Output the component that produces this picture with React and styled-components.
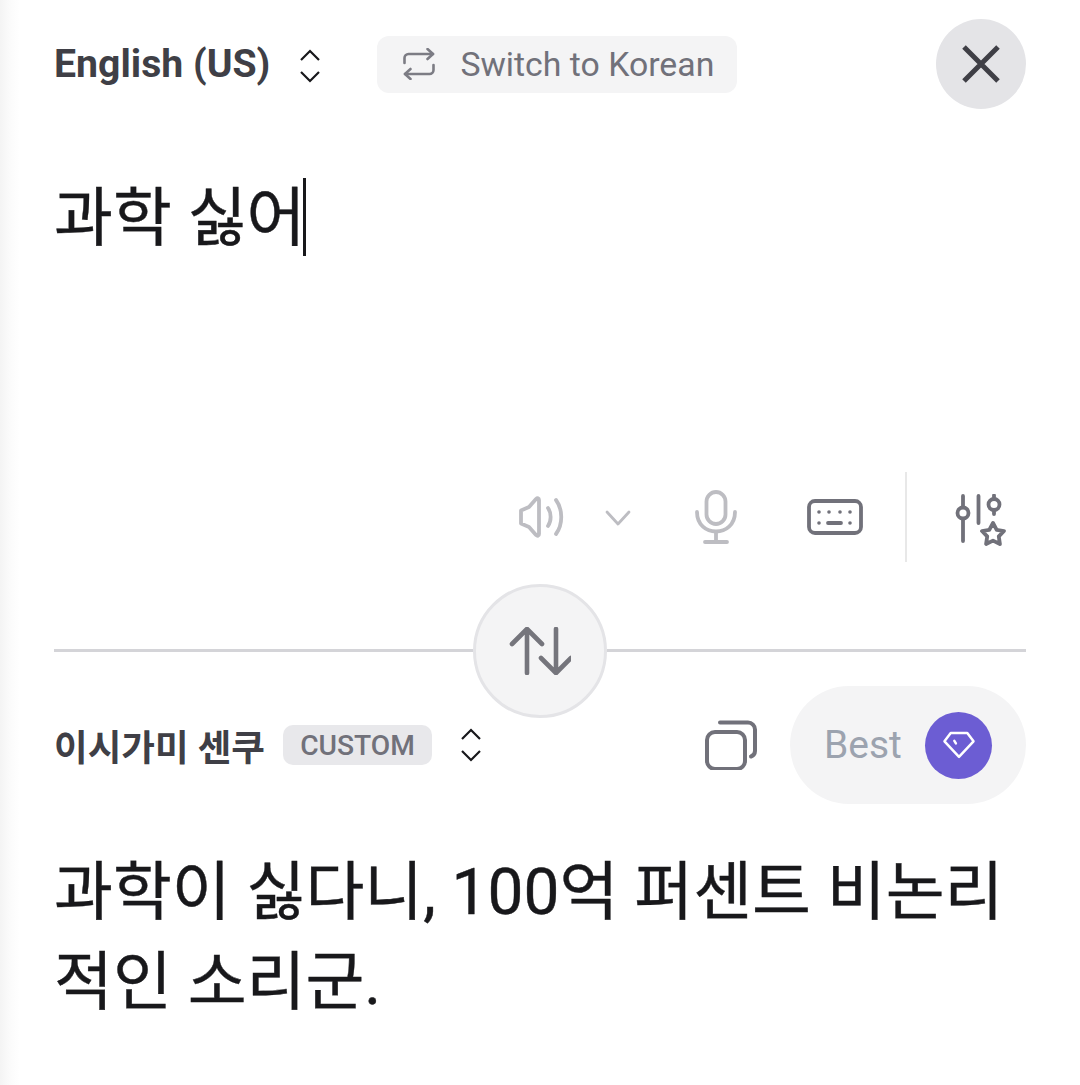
import React from "react";
import styled, { createGlobalStyle } from "styled-components";

const GlobalStyle = createGlobalStyle`
  html, body {
    margin: 0;
    padding: 0;
    background: #fff;
  }
  * {
    box-sizing: border-box;
  }
`;

const Page = styled.div`
  width: 1080px;
  height: 1085px;
  overflow: hidden;
  padding: 19px 54px 0;
  background: linear-gradient(90deg, #f4f4f4 0, #fbfbfb 10px, #fff 20px);
  font-family: Roboto, "Noto Sans CJK KR", sans-serif;
  color: #18181b;
`;

const Header = styled.div`
  display: flex;
  align-items: center;
  height: 90px;
`;

const SourceLang = styled.div`
  font-size: 39.2px;
  font-weight: 700;
  color: #3f3f46;
`;

const Chevrons = styled.svg`
  display: block;
  flex: none;
  margin-left: ${(p) => p.$left}px;
  margin-top: ${(p) => p.$top || 0}px;
`;

const SwitchButton = styled.div`
  display: flex;
  align-items: center;
  width: 360px;
  height: 57px;
  margin-left: 56px;
  padding-left: 26px;
  gap: 25px;
  border-radius: 12px;
  background: #f4f4f5;
  color: #71717a;
  font-size: 33.8px;
`;

const CloseButton = styled.div`
  display: flex;
  align-items: center;
  justify-content: center;
  width: 90px;
  height: 90px;
  margin-left: auto;
  border-radius: 50%;
  background: #e4e4e7;
`;

const SourceBody = styled.div`
  height: 363px;
  padding-top: 69px;
`;

const BigText = styled.div`
  font-size: 64px;
  line-height: 90px;
  color: #18181b;
  -webkit-text-stroke: 0.4px #18181b;
`;

const SourceText = styled(BigText)`
  display: flex;
  align-items: flex-start;
  height: 78px;
  line-height: 82px;
`;

const Caret = styled.span`
  width: 3px;
  height: 78px;
  margin-left: -2px;
  background: #18181b;
`;

const Toolbar = styled.div`
  display: flex;
  align-items: center;
  justify-content: flex-end;
  height: 90px;
  padding-right: 20px;
`;

const ToolIcon = styled.svg`
  display: block;
  flex: none;
  margin-left: ${(p) => p.$left || 0}px;
  margin-top: ${(p) => p.$top || 0}px;
`;

const ToolDivider = styled.div`
  width: 2px;
  height: 90px;
  margin: 0 48px 0 42px;
  background: #e8e8e8;
`;

const SwapRow = styled.div`
  display: flex;
  align-items: center;
  margin-top: 22px;
  height: 134px;
`;

const Rule = styled.div`
  flex: 1;
  height: 3px;
  margin-bottom: 2px;
  background: #d4d4d8;
`;

const SwapButton = styled.div`
  display: flex;
  align-items: center;
  justify-content: center;
  width: 134px;
  height: 134px;
  border: 3px solid #e4e4e7;
  border-radius: 50%;
  background: #f4f4f5;
`;

const TargetRow = styled.div`
  display: flex;
  align-items: center;
  height: 118px;
  margin-top: -32px;
`;

const TargetName = styled.div`
  font-size: 36.6px;
  font-weight: 700;
  color: #3f3f46;
`;

const CustomBadge = styled.div`
  display: flex;
  align-items: center;
  justify-content: center;
  width: 149px;
  height: 40px;
  margin-left: 18px;
  border-radius: 10px;
  background: #e8e8eb;
  color: #71717a;
  font-size: 28.2px;
  font-weight: 500;
`;

const BestPill = styled.div`
  display: flex;
  align-items: center;
  justify-content: space-between;
  width: 236px;
  height: 118px;
  margin-left: 33px;
  padding: 0 34px 0 34px;
  border-radius: 59px;
  background: #f4f4f5;
  color: #9ca3af;
  font-size: 39px;
`;

const BestBadge = styled.div`
  display: flex;
  align-items: center;
  justify-content: center;
  width: 67px;
  height: 67px;
  border-radius: 50%;
  background: #6c5dd3;
`;

const Spacer = styled.div`
  flex: 1;
`;

const TargetText = styled(BigText)`
  margin-top: 44px;
`;

function UpDown({ left, top }) {
  return (
    <Chevrons $left={left} $top={top} width="22" height="36" viewBox="0 0 22 36" fill="none" stroke="#18181b" strokeWidth="2.2">
      <path d="M2 12 11 3 20 12" />
      <path d="M2 24 11 33 20 24" />
    </Chevrons>
  );
}

export default function App() {
  return (
    <Page>
      <GlobalStyle />
      <Header>
        <SourceLang>English (US)</SourceLang>
        <UpDown left={29} top={4} />
        <SwitchButton>
          <svg width="32" height="32" viewBox="0 0 32 32" fill="none" stroke="#7c7c84" strokeWidth="2.6" strokeLinecap="round" strokeLinejoin="round">
            <path d="M1.5 15V10a4 4 0 0 1 4-4H30" />
            <path d="M24.5 1 30 6l-5.500 5" />
            <path d="M30.500 17v5a4 4 0 0 1-4 4H2" />
            <path d="M7.500 21 2 26l5.500 5" />
          </svg>
          Switch to Korean
        </SwitchButton>
        <CloseButton>
          <svg width="38" height="38" viewBox="0 0 38 38" stroke="#3f3f46" strokeWidth="5">
            <path d="M2 2 36 36M36 2 2 36" />
          </svg>
        </CloseButton>
      </Header>

      <SourceBody>
        <SourceText>
          과학 싫어
          <Caret />
        </SourceText>
      </SourceBody>

      <Toolbar>
        <ToolIcon width="46" height="42" viewBox="0 0 46 42" fill="none" stroke="#bdbdc2" strokeWidth="3.8" strokeLinecap="round" strokeLinejoin="round">
          <path d="M2 14.500 10 11 17 3c1.500-1.500 3-1 3 1v34c0 2-1.500 2.500-3 1l-7-8-8-3.500z" />
          <path d="M29 12c3.500 5 3.500 13 0 18" />
          <path d="M37 4c7 9.500 7 24.500 0 34" />
        </ToolIcon>
        <ToolIcon $left={39} $top={2} width="28" height="16" viewBox="0 0 28 16" fill="none" stroke="#bdbdc2" strokeWidth="2.800" strokeLinecap="round" strokeLinejoin="round">
          <path d="M3 2 14 14 25 2" />
        </ToolIcon>
        <ToolIcon $left={63} width="42" height="54" viewBox="0 0 42 54" fill="none" stroke="#bdbdc2" strokeWidth="3.800" strokeLinecap="round">
          <rect x="11.500" y="2" width="19" height="32" rx="9.500" />
          <path d="M2 22c0 26 38 26 38 0" />
          <path d="M21 42v10M10 52h22" />
        </ToolIcon>
        <ToolIcon $left={70} width="56" height="36" viewBox="0 0 56 36" fill="none" stroke="#71717a" strokeWidth="3.800" strokeLinecap="round">
          <rect x="2" y="2" width="52" height="32" rx="6" />
          <path d="M21 24h13" />
          <g fill="#71717a" stroke="none">
            <circle cx="12" cy="13" r="1.800" />
            <circle cx="22" cy="13" r="1.800" />
            <circle cx="33" cy="13" r="1.800" />
            <circle cx="43" cy="13" r="1.800" />
            <circle cx="12" cy="24" r="1.800" />
            <circle cx="43" cy="24" r="1.800" />
          </g>
        </ToolIcon>
        <ToolDivider />
        <ToolIcon $top={7} width="51" height="53" viewBox="0 0 51 53" fill="none" stroke="#71717a" strokeWidth="3.800" strokeLinecap="round" strokeLinejoin="round">
          <path d="M8 2v11M8 25v22M23.500 2v27M39 1.500v2M39 17.500v2.500" />
          <circle cx="8" cy="19" r="5.500" />
          <circle cx="39" cy="10.500" r="5.500" />
          <path d="M38 29l3.700 6.800 7.300 1.200-5.200 5.400 1.100 7.600-6.900-3.400-6.900 3.400 1.100-7.600-5.200-5.400 7.300-1.200z" />
        </ToolIcon>
      </Toolbar>

      <SwapRow>
        <Rule />
        <SwapButton>
          <svg width="62" height="48" viewBox="0 0 62 48" fill="none" stroke="#75757c" strokeWidth="4.600" strokeLinecap="round" strokeLinejoin="round">
            <path d="M18 2v44M3 17 18 2l15 15" />
            <path d="M47 2v44M32 31l15 15 15-15" />
          </svg>
        </SwapButton>
        <Rule />
      </SwapRow>

      <TargetRow>
        <TargetName>이시가미 센쿠</TargetName>
        <CustomBadge>CUSTOM</CustomBadge>
        <UpDown left={28} />
        <Spacer />
        <svg width="52" height="50" viewBox="0 0 52 50" fill="none" stroke="#71717a" strokeWidth="4" strokeLinecap="round">
          <rect x="2" y="12" width="38" height="37" rx="8" />
          <path d="M15 2.500h28a7 7 0 0 1 7 7V31a6 6 0 0 1-4 5.500" />
        </svg>
        <BestPill>
          Best
          <BestBadge>
            <svg width="34" height="28" viewBox="0 0 32 27" fill="none" stroke="#fff" strokeWidth="2.400" strokeLinecap="round" strokeLinejoin="round">
              <path d="M8 2h16l6 8-14 15L2 10z" />
              <path d="M11.500 9.500 13 12" />
            </svg>
          </BestBadge>
        </BestPill>
      </TargetRow>

      <TargetText>
        과학이 싫다니, 100억 퍼센트 비논리
        <br />
        적인 소리군.
      </TargetText>
    </Page>
  );
}
